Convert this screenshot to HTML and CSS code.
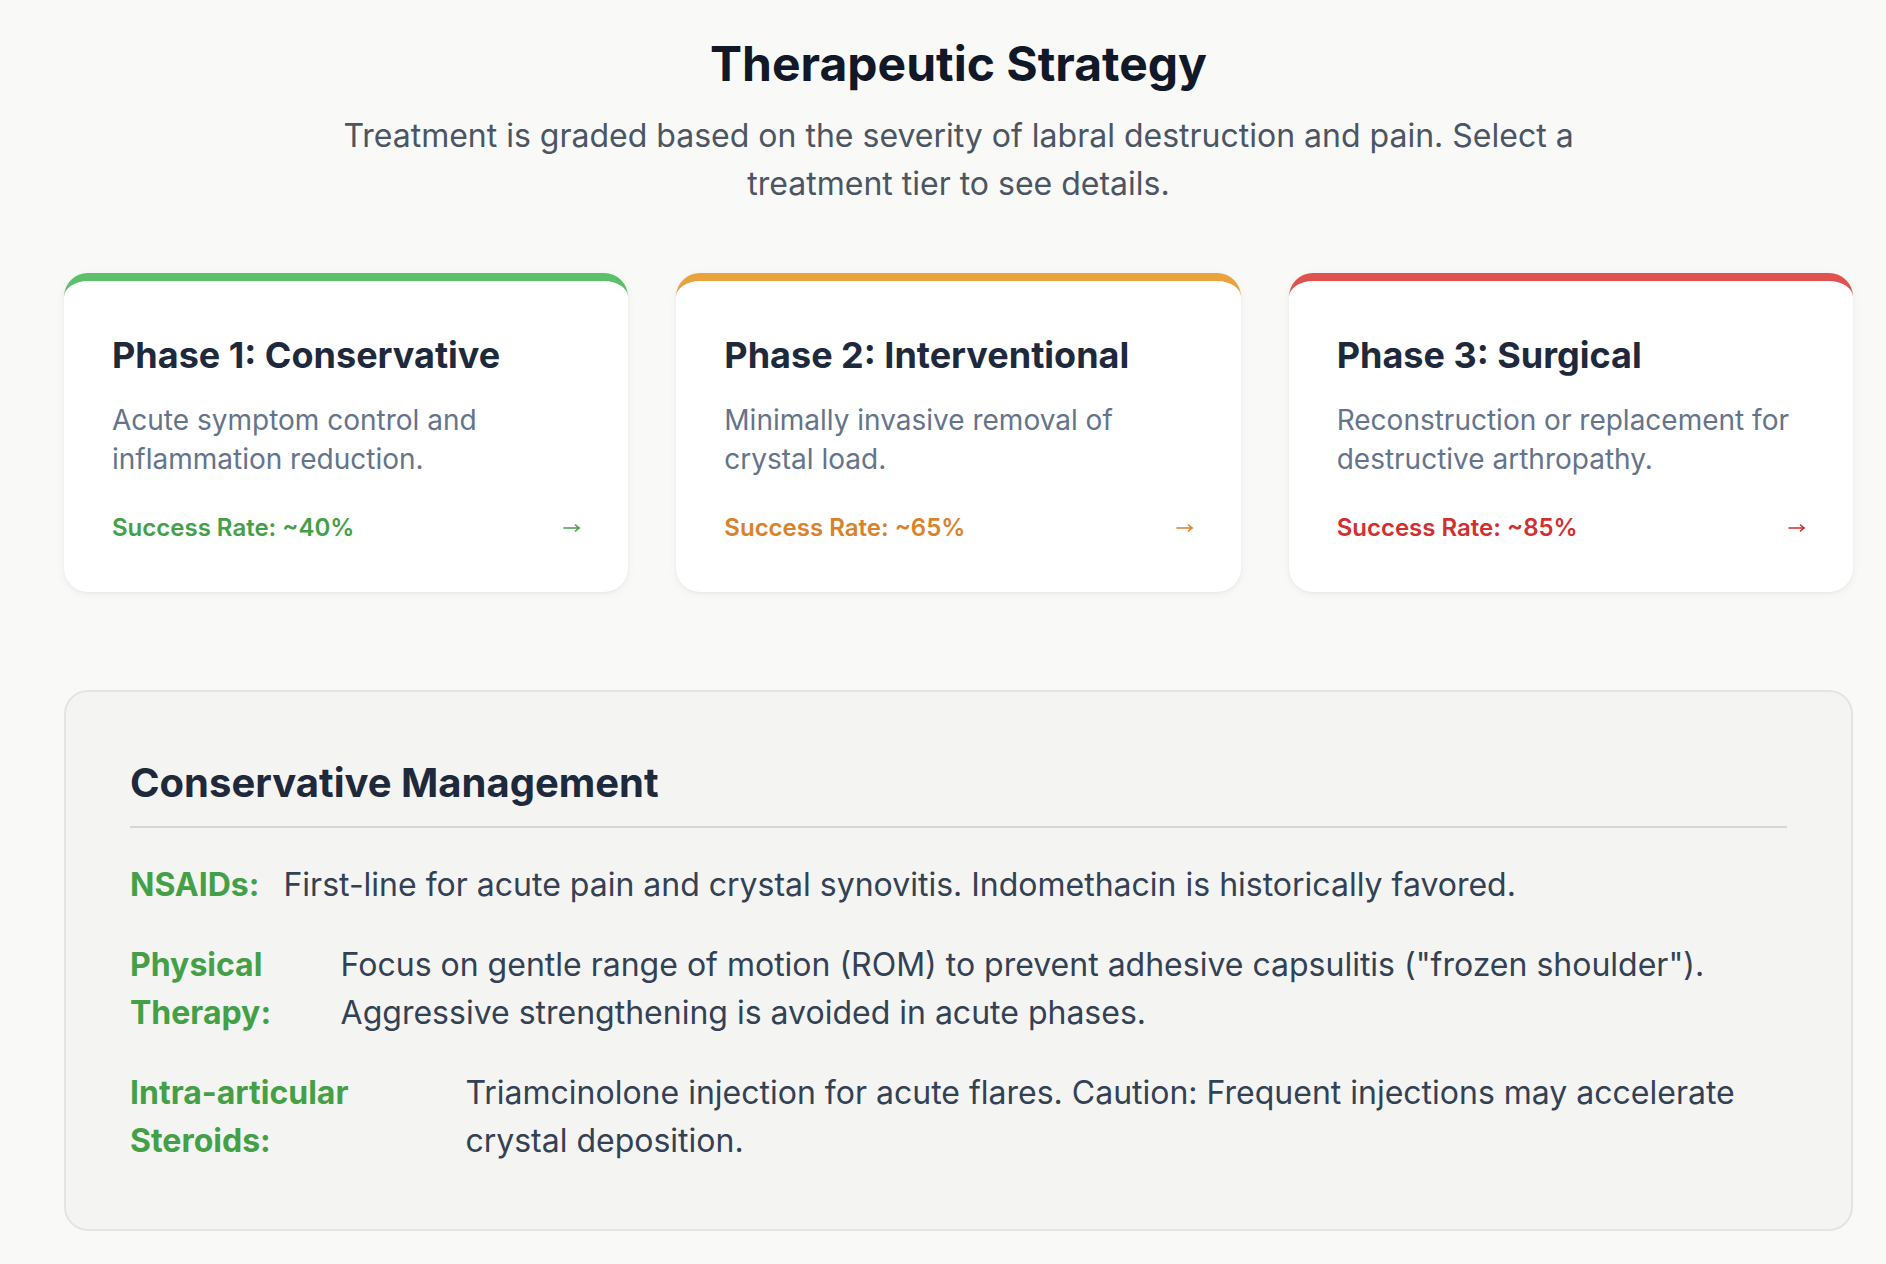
FILE: index.html
```html
<!DOCTYPE html>
<html lang="en">
<head>
<meta charset="utf-8">
<title>Therapeutic Strategy</title>
<link rel="stylesheet" href="styles.css">
</head>
<body>
<main class="page">
  <header class="intro">
    <h1 class="intro-title">Therapeutic Strategy</h1>
    <p class="intro-text">Treatment is graded based on the severity of labral destruction and pain. Select a treatment tier to see details.</p>
  </header>

  <section class="tiers">
    <article class="tier tier-green">
      <h2 class="tier-title">Phase 1: Conservative</h2>
      <p class="tier-desc">Acute symptom control and inflammation reduction.</p>
      <div class="tier-foot">
        <span class="tier-rate">Success Rate: ~40%</span>
        <svg class="tier-arrow" viewBox="0 0 18 10" aria-hidden="true"><path d="M1 5h15.5M12.5 2l3.5 3-3.5 3"/></svg>
      </div>
    </article>
    <article class="tier tier-orange">
      <h2 class="tier-title">Phase 2: Interventional</h2>
      <p class="tier-desc">Minimally invasive removal of crystal load.</p>
      <div class="tier-foot">
        <span class="tier-rate">Success Rate: ~65%</span>
        <svg class="tier-arrow" viewBox="0 0 18 10" aria-hidden="true"><path d="M1 5h15.5M12.5 2l3.5 3-3.5 3"/></svg>
      </div>
    </article>
    <article class="tier tier-red">
      <h2 class="tier-title">Phase 3: Surgical</h2>
      <p class="tier-desc">Reconstruction or replacement for destructive arthropathy.</p>
      <div class="tier-foot">
        <span class="tier-rate">Success Rate: ~85%</span>
        <svg class="tier-arrow" viewBox="0 0 18 10" aria-hidden="true"><path d="M1 5h15.5M12.5 2l3.5 3-3.5 3"/></svg>
      </div>
    </article>
  </section>

  <section class="detail">
    <h3 class="detail-title">Conservative Management</h3>
    <ul class="detail-list">
      <li class="detail-row">
        <strong class="detail-label">NSAIDs:</strong>
        <span class="detail-text">First-line for acute pain and crystal synovitis. Indomethacin is historically favored.</span>
      </li>
      <li class="detail-row">
        <strong class="detail-label">Physical Therapy:</strong>
        <span class="detail-text">Focus on gentle range of motion (ROM) to prevent adhesive capsulitis ("frozen shoulder"). Aggressive strengthening is avoided in acute phases.</span>
      </li>
      <li class="detail-row">
        <strong class="detail-label">Intra-articular Steroids:</strong>
        <span class="detail-text">Triamcinolone injection for acute flares. Caution: Frequent injections may accelerate crystal deposition.</span>
      </li>
    </ul>
  </section>
</main>
</body>
</html>
```

FILE: styles.css
```css
* {
  box-sizing: border-box;
}

html, body {
  margin: 0;
  padding: 0;
}

body {
  background: #f9f9f7;
  font-family: Inter, "Noto Sans", "Liberation Sans", sans-serif;
  color: #1e293b;
}

.page {
  padding: 40px 33px 40px 64px;
}

.intro {
  text-align: center;
}

.intro-title {
  margin: 0;
  font-size: 48px;
  line-height: 48px;
  font-weight: 700;
  color: #111827;
}

.intro-text {
  margin: 24px auto 0;
  max-width: 1300px;
  font-size: 32px;
  line-height: 48px;
  color: #4b5563;
}

.tiers {
  margin-top: 65px;
  display: grid;
  grid-template-columns: repeat(3, 1fr);
  gap: 48px;
}

.tier {
  background: #ffffff;
  border-radius: 24px;
  border-top: 8px solid #5cbf6a;
  padding: 56px 48px 48px;
  box-shadow: 0 2px 10px rgba(0, 0, 0, 0.05), 0 1px 3px rgba(0, 0, 0, 0.04);
}

.tier-orange { border-top-color: #e9a23c; }
.tier-red { border-top-color: #df5250; }

.tier-title {
  margin: 0 0 28px;
  font-size: 36px;
  line-height: 36px;
  font-weight: 700;
  color: #1e293b;
}

.tier-desc {
  margin: 0 0 32px;
  font-size: 28px;
  line-height: 39px;
  color: #64748b;
}

.tier-foot {
  display: flex;
  justify-content: space-between;
  align-items: center;
  line-height: 33px;
}

.tier-rate {
  font-size: 24px;
  font-weight: 600;
}

.tier-arrow {
  width: 18px;
  height: 10px;
  margin-right: -1px;
  fill: none;
  stroke: currentColor;
  stroke-width: 1.6;
  stroke-linecap: round;
  stroke-linejoin: round;
}

.tier-green .tier-foot { color: #43a047; }
.tier-orange .tier-foot { color: #d9822b; }
.tier-red .tier-foot { color: #d32f2f; }

.detail {
  margin-top: 98px;
  background: #f4f4f2;
  border: 2px solid #e4e4e2;
  border-radius: 24px;
  padding: 64px;
}

.detail-title {
  margin: 0;
  padding-bottom: 16px;
  border-bottom: 2px solid #d9d6d6;
  font-size: 40px;
  line-height: 54px;
  font-weight: 700;
  color: #1e293b;
}

.detail-list {
  list-style: none;
  margin: 33px 0 0;
  padding: 0;
  display: flex;
  flex-direction: column;
  gap: 32px;
}

.detail-row {
  display: flex;
  font-size: 32px;
  line-height: 48px;
}

.detail-label {
  margin-right: 24px;
  font-weight: 700;
  color: #43a047;
}

.detail-text {
  color: #334155;
}
```
